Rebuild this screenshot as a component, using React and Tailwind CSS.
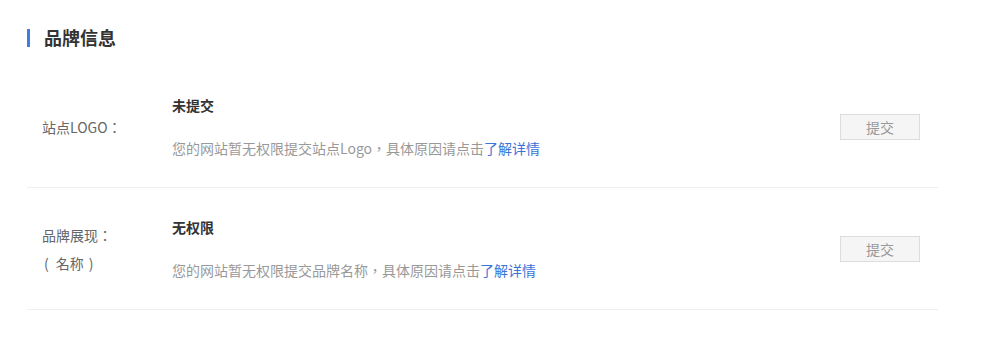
const font = { fontFamily: '"Noto Sans CJK SC", "Liberation Sans", sans-serif' };
const tc = { fontFamily: '"Noto Sans CJK TC", "Liberation Sans", sans-serif' };

const rows = [
    {
        label: '站点LOGO：',
        status: '未提交',
        desc: '您的网站暂无权限提交站点Logo',
    },
    {
        label: '品牌展现：',
        sub: '名称',
        status: '无权限',
        desc: '您的网站暂无权限提交品牌名称',
    },
];

function BrandRow({ row }) {
    return (
        <div className="flex items-center border-b border-[#eeeeee] pl-[15px] pr-[18px]">
            <div className="w-[130px] text-[14px] leading-[28px] text-[#666]" style={tc}>
                <div>{row.label}</div>
                {row.sub && (
                    <div className="pl-[2px]">
                        (<span className="ml-[7px] mr-[5px]">{row.sub}</span>)
                    </div>
                )}
            </div>
            <div className="flex-1 py-[29px]">
                <div className="text-[14px] leading-5 font-bold text-[#333]">{row.status}</div>
                <div className="mt-[23px] text-[14px] leading-5 text-[#999]">
                    {row.desc}
                    <span style={tc}>，</span>
                    具体原因请点击
                    <a href="#" className="text-[#3b74d8]">了解详情</a>
                </div>
            </div>
            <button className="w-[80px] h-[26px] border border-[#dddddd] bg-[#f5f5f5] text-[14px] text-[#999] leading-[24px]">
                提交
            </button>
        </div>
    );
}

export default function App() {
    return (
        <div className="w-[986px] h-[356px] bg-white" style={font}>
            <div className="w-[911px] ml-[27px] pt-[28px]">
                <div className="flex items-center h-[19px]">
                    <span className="w-[3px] h-[18px] bg-[#3d7ee0]"></span>
                    <h2 className="ml-[14px] text-[18px] font-bold text-[#333] leading-none -mt-[2px]">品牌信息</h2>
                </div>
                <div className="mt-[19px]">
                    {rows.map((row, i) => (
                        <BrandRow key={i} row={row} />
                    ))}
                </div>
            </div>
        </div>
    );
}
